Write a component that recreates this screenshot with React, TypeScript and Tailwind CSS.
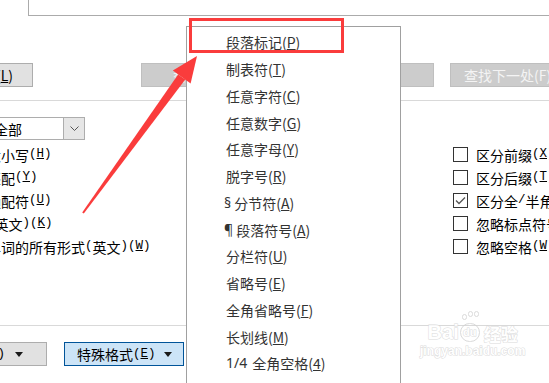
import React from "react";

const cjk = { fontFamily: '"Noto Sans CJK SC", "Noto Sans", sans-serif' };
const mono = { fontFamily: '"Liberation Mono", monospace' };

const menuItems: [string, string, string, string][] = [
  ["", "段落标记(", "P", ")"],
  ["", "制表符(", "T", ")"],
  ["", "任意字符(", "C", ")"],
  ["", "任意数字(", "G", ")"],
  ["", "任意字母(", "Y", ")"],
  ["", "脱字号(", "R", ")"],
  ["§", "分节符(", "A", ")"],
  ["¶", "段落符号(", "A", ")"],
  ["", "分栏符(", "U", ")"],
  ["", "省略号(", "E", ")"],
  ["", "全角省略号(", "F", ")"],
  ["", "长划线(", "M", ")"],
  ["1/4", "全角空格(", "4", ")"],
];

const leftChecks: [string, string][] = [
  ["区分大小写(", "H"],
  ["全字匹配(", "Y"],
  ["使用通配符(", "U"],
  ["同音(英文)(", "K"],
  ["查找单词的所有形式(英文)(", "W"],
];

const rightChecks: { label: string; key: string; checked?: boolean }[] = [
  { label: "区分前缀(", key: "X" },
  { label: "区分后缀(", key: "T" },
  { label: "区分全/半角(", key: "M", checked: true },
  { label: "忽略标点符号(", key: "S" },
  { label: "忽略空格(", key: "W" },
];

// SimSun-like label: ascii runs are half width
const Mixed = ({ text }: { text: string }) => (
  <>
    {text.split(/([\x20-\x7e]+)/).map((s, i) =>
      /^[\x20-\x7e]+$/.test(s) ? (
        <span key={i} className="text-[12.5px]" style={mono}>
          {s}
        </span>
      ) : (
        <span key={i}>{s}</span>
      )
    )}
  </>
);

const Label = ({ text, k }: { text: string; k: string }) => (
  <span className="flex items-center">
    <Mixed text={text} />
    <span className="text-[12.5px] underline" style={mono}>
      {k}
    </span>
    <span className="text-[12.5px]" style={mono}>
      )
    </span>
  </span>
);

const Caret = () => (
  <svg width="8" height="5" viewBox="0 0 8 5" className="shrink-0">
    <path d="M0 0 H8 L4 5 Z" fill="#1a1a1a" />
  </svg>
);

const CheckBox = ({ checked }: { checked?: boolean }) => (
  <span className="flex h-[15px] w-[15px] shrink-0 items-center justify-center border border-[#333] bg-white">
    {checked && (
      <svg width="11" height="9" viewBox="0 0 11 9">
        <path d="M1 4.5 L4 7.5 L10 1.5" fill="none" stroke="#555" strokeWidth="1.3" />
      </svg>
    )}
  </span>
);

export default function App() {
  return (
    <div className="relative h-[383px] w-[549px] overflow-hidden bg-white text-[14px] text-black" style={cjk}>
      {/* input box at the top */}
      <div className="ml-[28px] h-[16px] border-b border-l border-[#ababab]" />

      {/* button row */}
      <div className="mt-[47px] flex h-[24px] whitespace-nowrap leading-none">
        <div className="ml-[-27px] flex w-[60px] shrink-0 items-center justify-end border border-[#adadad] bg-[#e1e1e1] pr-[19px]">
          更多(<span className="underline">L</span>)
        </div>
        <div className="ml-[108px] flex w-[94px] shrink-0 items-center border border-[#bfbfbf] bg-[#cccccc] pl-[31px] text-[#f4f4f4]">
          替换(R)
        </div>
        <div className="ml-[10px] flex w-[189px] shrink-0 items-center justify-center border border-[#bfbfbf] bg-[#cccccc] text-[#f4f4f4]">
          全部替换(A)
        </div>
        <div className="ml-[16px] flex w-[120px] shrink-0 items-center border border-[#bfbfbf] bg-[#cccccc] pl-[13px] text-[#f4f4f4]">
          查找下一处(F)
        </div>
      </div>

      <div className="mt-[13px] h-px bg-[#d9d9d9]" />

      {/* search select */}
      <div className="ml-[-80px] mt-[16px] flex h-[23px] w-[165px] border border-[#adadad] bg-white leading-none">
        <div className="flex flex-1 items-center pl-[73px]">全部</div>
        <div className="flex w-[21px] items-center justify-center border-l border-[#adadad] bg-[#e6e6e6]">
          <svg width="9" height="6" viewBox="0 0 9 6">
            <path d="M0.5 0.5 L4.5 4.5 L8.5 0.5" fill="none" stroke="#555" strokeWidth="1" />
          </svg>
        </div>
      </div>

      {/* checkboxes */}
      <div className="mt-[3px] flex whitespace-nowrap leading-none">
        <div className="flex w-[453px] shrink-0 flex-col">
          {leftChecks.map(([t, k]) => (
            <div key={t} className="ml-[-62px] flex h-[23px] items-center gap-[6px]">
              <CheckBox />
              <Label text={t} k={k} />
            </div>
          ))}
        </div>
        <div className="flex flex-col">
          {rightChecks.map((r) => (
            <div key={r.label} className="flex h-[23px] items-center gap-[8px]">
              <CheckBox checked={r.checked} />
              <Label text={r.label} k={r.key} />
            </div>
          ))}
        </div>
      </div>

      <div className="mt-[67px] h-px bg-[#d9d9d9]" />

      {/* bottom buttons */}
      <div className="mt-[16px] flex h-[24px] whitespace-nowrap leading-none">
        <div className="ml-[-43px] flex w-[90px] shrink-0 items-center justify-end gap-[10px] border border-[#adadad] bg-[#e1e1e1] pr-[23px]">
          <Label text="格式(" k="O" />
          <Caret />
        </div>
        <div className="ml-[17px] flex w-[120px] shrink-0 items-center gap-[8px] border border-[#005499] bg-[#cce4f7] pl-[12px]">
          <Label text="特殊格式(" k="E" />
          <Caret />
        </div>
      </div>

      {/* watermark */}
      <div className="pointer-events-none absolute left-[420px] top-[322px] flex flex-col items-center text-white opacity-80 [-webkit-text-stroke:1px_#d2d2d2] [paint-order:stroke_fill]">
        <div className="flex items-end leading-none">
          <span className="text-[20px] font-bold" style={{ fontFamily: '"Liberation Sans", sans-serif' }}>
            Bai
          </span>
          <span className="relative ml-[1px] flex h-[19px] w-[20px] items-center justify-center rounded-full border border-[#d2d2d2] text-[11px] font-bold" style={{ fontFamily: '"Liberation Sans", sans-serif' }}>
            du
            <span className="absolute left-[1px] top-[-13px] flex gap-[1px]">
              <span className="mt-[3px] h-[6px] w-[5px] rounded-full border border-[#d2d2d2]" />
              <span className="h-[6px] w-[5px] rounded-full border border-[#d2d2d2]" />
              <span className="h-[6px] w-[5px] rounded-full border border-[#d2d2d2]" />
            </span>
          </span>
          <span className="ml-[4px] text-[17px] font-bold">经验</span>
        </div>
        <div className="mt-[3px] text-[12px] font-bold leading-none" style={{ fontFamily: '"Liberation Sans", sans-serif' }}>
          jingyan.baidu.com
        </div>
      </div>

      {/* dropdown menu */}
      <div className="absolute left-[186px] top-[26px] h-[400px] w-[215px] border border-[#a0a0a0] bg-white pt-[2px] text-[14px] text-[#333]">
        {menuItems.map(([pre, a, k, b], i) => (
          <div key={i} className="flex h-[26.75px] items-center whitespace-nowrap pl-[39px] leading-none">
            {pre && (
              <span
                className={pre.length === 1 ? "ml-[-2px] mr-[3px]" : "mr-[5px]"}
                style={{ fontFamily: '"Noto Sans", sans-serif' }}
              >
                {pre}
              </span>
            )}
            {a}
            <span className="underline">{k}</span>
            {b}
          </div>
        ))}
      </div>

      {/* red callout */}
      <div className="pointer-events-none absolute left-[189px] top-[18px] h-[35px] w-[155px] border-[3px] border-[#fa3c3c]" />
      <svg className="pointer-events-none absolute left-0 top-0" width="549" height="383" viewBox="0 0 549 383">
        <polygon points="83.8,213.6 82.2,212.4 178.1,74.4 185.3,79.6" fill="#fa3c3c" />
        <polygon points="197,56 172.8,70.5 190.6,83.5" fill="#fa3c3c" />
      </svg>
    </div>
  );
}
